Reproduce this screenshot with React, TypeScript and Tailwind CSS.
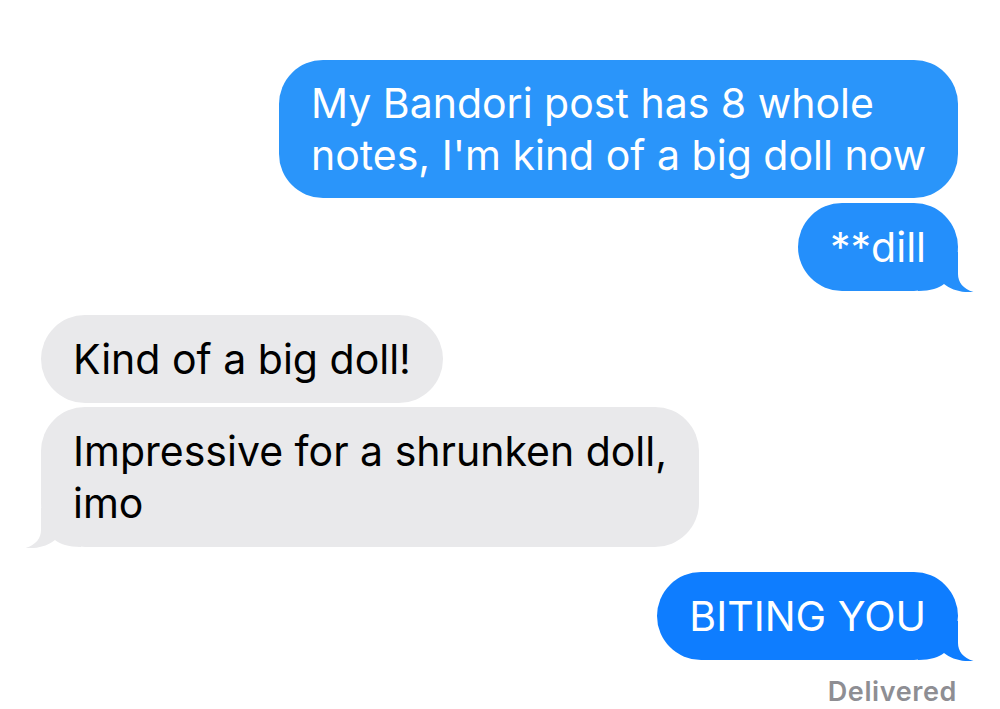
import React from "react";

const FONT = { fontFamily: "Inter, 'Noto Sans', sans-serif" };

function RightTail({ color }: { color: string }) {
  return (
    <svg
      className="absolute -right-[16px] -bottom-[1px]"
      width="56"
      height="40"
      viewBox="0 0 56 40"
    >
      <path
        d="M0 0 L40 0 L40 22 C40 30 45 37 55.5 40 C45 41 33 38 26 32 C21 36 13 39 0 39 Z"
        fill={color}
      />
    </svg>
  );
}

function LeftTail({ color }: { color: string }) {
  return (
    <svg
      className="absolute -left-[16px] -bottom-[1px]"
      width="56"
      height="40"
      viewBox="0 0 56 40"
    >
      <path
        d="M56 0 L16 0 L16 22 C16 30 11 37 0.5 40 C11 41 23 38 30 32 C35 36 43 39 56 39 Z"
        fill={color}
      />
    </svg>
  );
}

export default function App() {
  return (
    <div
      className="w-[1000px] h-[709px] bg-white overflow-hidden flex flex-col pt-[60px] pl-[41px] pr-[42px]"
      style={FONT}
    >
      {/* Sent group */}
      <div className="flex flex-col items-end gap-[5px]">
        <div className="relative rounded-[44px] bg-[#2a95fa] text-white text-[41px] leading-[52px] px-[32px] py-[17px]">
          <span className="relative z-10">
            My Bandori post has 8 whole
            <br />
            notes, I'm kind of a big doll now
          </span>
        </div>
        <div className="relative rounded-[44px] bg-[#248ffb] text-white text-[41px] leading-[52px] px-[32px] py-[18px]">
          <RightTail color="#248ffb" />
          <span className="relative z-10">**dill</span>
        </div>
      </div>

      {/* Received group */}
      <div className="flex flex-col items-start gap-[4px] mt-[24px]">
        <div className="relative rounded-[44px] bg-[#e9e9eb] text-black text-[41px] leading-[52px] px-[32px] py-[18px]">
          <span className="relative z-10">Kind of a big doll!</span>
        </div>
        <div className="relative rounded-[44px] bg-[#e9e9eb] text-black text-[41px] leading-[52px] px-[32px] py-[18px]">
          <LeftTail color="#e9e9eb" />
          <span className="relative z-10">
            Impressive for a shrunken doll,
            <br />
            imo
          </span>
        </div>
      </div>

      {/* Last sent */}
      <div className="flex flex-col items-end mt-[25px]">
        <div className="relative rounded-[44px] bg-[#0e7dff] text-white text-[41px] leading-[52px] px-[32px] py-[18px]">
          <RightTail color="#0e7dff" />
          <span className="relative z-10">BITING YOU</span>
        </div>
        <div className="mt-[16px] text-[27px] leading-[32px] font-semibold tracking-[0.6px] text-[#8e8e93] mr-[1px]">
          Delivered
        </div>
      </div>
    </div>
  );
}
